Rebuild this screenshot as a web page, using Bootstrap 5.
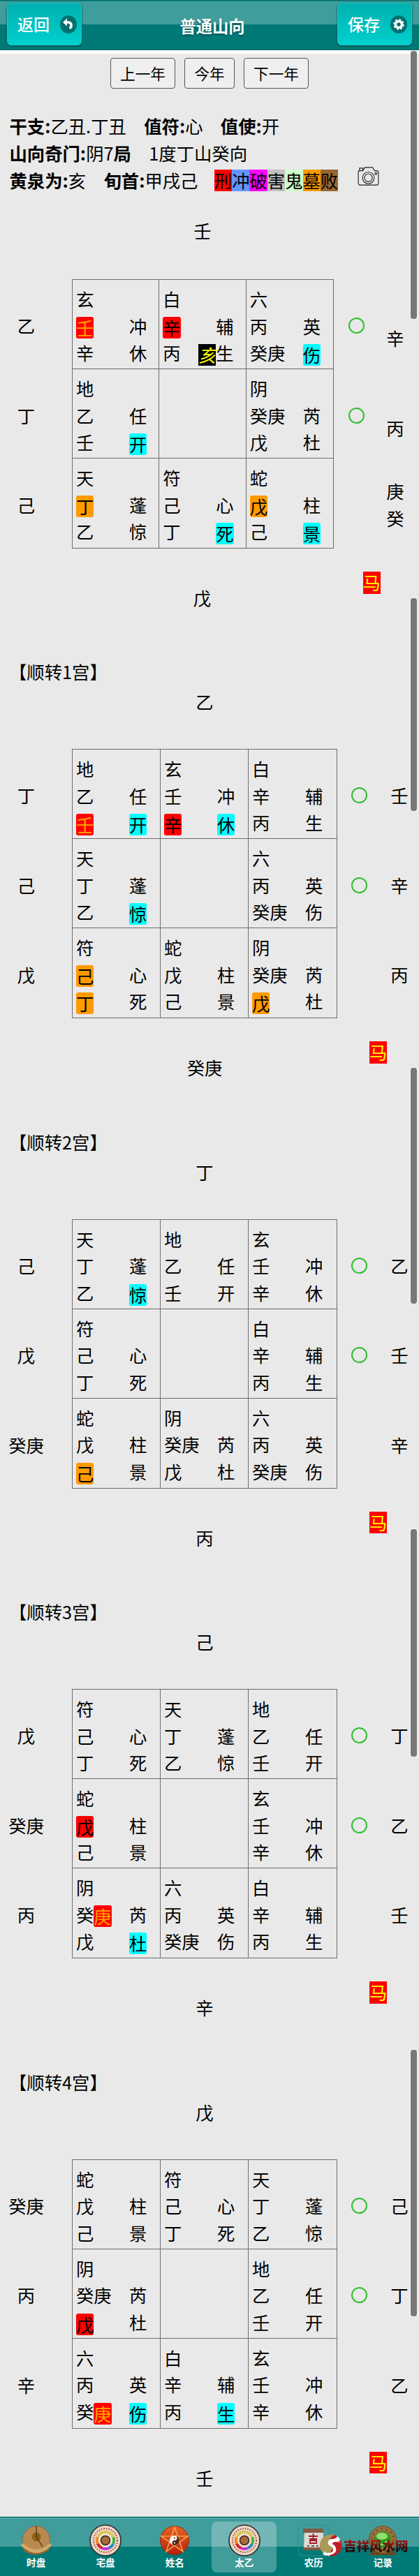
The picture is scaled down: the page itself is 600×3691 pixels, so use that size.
<!DOCTYPE html>
<html lang="zh-CN">
<head>
  <meta charset="UTF-8" />
  <meta name="viewport" content="width=device-width, initial-scale=1.0"/>
  <title>普通山向</title>
  <link href="https://cdn.jsdelivr.net/npm/bootstrap@5.3.0/dist/css/bootstrap.min.css" rel="stylesheet">
  <style>
    body {
      background: #e9e9e9;
      color: #000;
      font-family: "Noto Sans CJK SC", sans-serif;
      font-size: 25.35px;
      line-height: 38.7px;
    }
    .app { width: 600px; height: 3691px; overflow: hidden; }

    /* top bar */
    .topbar {
      height: 72px;
      background: linear-gradient(#006e6c 0, #006e6c 1px, #3f9d9b 2px, #3f9d9b 35px, #007876 35px, #007a77 70px, #066 72px);
      padding: 4px 10px 0;
    }
    .topbar h1 { font-size: 23.3px; line-height: 67px; color: #fff; text-shadow: 0 2px 2px #055; }
    .topbtn {
      width: 107px;
      height: 61px;
      padding: 0 6px 0 14px;
      border: 1px solid #18c8c6;
      border-radius: 6px;
      background: linear-gradient(#00b1b0, #00cfce);
      box-shadow: 0 1px 3px #044;
      color: #fff;
      font-size: 23px;
      font-weight: 500;
    }
    .topgap { height: 5px; background: #fff; }

    .yearbtns { height: 50px; margin-top: 6px; gap: 13.5px; }
    .yearbtn {
      height: 44px;
      padding: 0 13px;
      border: 1px solid #555;
      border-radius: 4px;
      background: #efefef;
      color: #000;
      font-size: 21.6px;
      line-height: 42px;
    }

    .info { margin-top: 28px; padding-left: 13.5px; line-height: 39px; white-space: pre; }
    .info > div { height: 39px; }
    .info .tag { display: inline-block; line-height: 31px; height: 31px; vertical-align: middle; }
    #legend { margin-left: -2px; }
    .camera { margin: 0 0 12px 27px; }

    /* one chart */
    .chart-title { height: 38px; padding-left: 13px; line-height: 36px; }
    .chart-top { height: 91px; text-align: center; padding: 4px 14px 0 0; }
    .board { height: 386px; }
    .side-left { width: 103px; padding-right: 28px; }
    .side-left div, .side-circle div { height: 128.6px; padding-top: 47px; text-align: center; }
    .side-circle { width: 63px; }
    .side-circle i { display: block; width: 23px; height: 23px; border: 2px solid #2fbf2f; border-radius: 50%; margin: 8px auto 0; }
    .side-right { width: 52px; text-align: center; }
    .side-right div { height: 128.6px; padding-top: 47px; }
    .palace { width: 380px; display: grid; grid-template: repeat(3, 1fr) / repeat(3, 1fr); border: 1px solid #6c6c6c; }
    .palace > div { border: 0 solid #6c6c6c; border-width: 0 1px 1px 0; padding: 8px 0 0 5px; white-space: pre; }
    .palace > div > div { height: 38.7px; }
    .palace > div:nth-child(3n) { border-right: 0; }
    .palace > div:nth-child(n+7) { border-bottom: 0; }
    .chart-foot { height: 158.5px; position: relative; }
    .chart-foot .below { width: 586px; padding-top: 51px; text-align: center; }
    .horse { position: absolute; left: 529px; top: 33px; height: 31.5px; line-height: 31px; background: #f00; color: #ff0; }
    section:last-child .chart-foot { height: 126px; }

    .mk { display: inline-block; height: 31px; line-height: 31px; border-radius: 3px; vertical-align: middle; margin-top: -2px; }
    .mk-r { background: #f00; }
    .mk-o { background: #f00; color: #ffa500; }
    .mk-g { background: #ff9a00; }
    .mk-c { background: #0ff; }
    .mk-h { background: #000; color: #ff0; border-radius: 0; font-style: italic; }

    /* first chart has a narrower palace and no title */
    .chart-first .chart-top { height: 122px; padding: 33px 20px 0 0; }
    .chart-first .palace { width: 375px; }
    .chart-first .side-circle { width: 66px; }
    .chart-first .side-circle { margin-left: -1px; }
    .chart-first .side-right { padding-top: 65px; margin-left: -3px; }
    .chart-first .side-right div { height: auto; padding: 0 0 90px; }
    .chart-first .side-right div:nth-child(2) { padding-bottom: 52px; }
    .chart-first .chart-foot { height: 158px; }
    .chart-first .below { width: 579px; }
    .chart-first .horse { left: 519.5px; }

    .thumb { position: absolute; left: 588px; width: 9px; background: #777; border-radius: 4px; box-shadow: 0 0 1px 1px #f4f4f4; }

    /* bottom tabs */
    .tabs {
      height: 86px;
      background: linear-gradient(#006b69 0, #006b69 1px, #6fbcba 2px, #419d9b 3px, #419d9b 43px, #007a77 43px);
      padding: 0 2px;
    }
    .tab-item { flex: 1 0 0; padding-top: 4px; height: 73px; margin: 7px 3px 0; border-radius: 8px; text-align: center; color: #fff; font-size: 13.6px; font-weight: 700; line-height: 16px; }
    .tab-item svg { display: block; margin: 0 auto; }
    .tab-item.active { background: rgba(255, 255, 255, .26); }
    .watermark { position: absolute; left: 458px; top: 3630px; height: 34px; }
    .watermark b {
      font-size: 18.5px;
      font-weight: 900;
      margin-left: 2px;
      background: linear-gradient(#b01818 30%, #2a0c0c 65%);
      -webkit-background-clip: text;
      color: transparent;
    }
  </style>
</head>
<body>
  <div class="app position-relative">
    <header class="topbar d-flex justify-content-between">
      <button class="topbtn d-flex align-items-center justify-content-between">返回
        <svg width="24" height="26" viewBox="0 0 24 26"><ellipse cx="12" cy="13" rx="12" ry="13" fill="#00716f"/><path d="M8 10h4.500a4.500 4.500 0 0 1 1 8.500" fill="none" stroke="#fff" stroke-width="3.500"/><path d="M4 10l6-5.500v11z" fill="#fff"/></svg>
      </button>
      <h1 class="mb-0 fw-bold ps-2">普通山向</h1>
      <button class="topbtn d-flex align-items-center justify-content-between">保存
        <svg width="24" height="26" viewBox="0 0 24 26"><ellipse cx="12" cy="13" rx="12" ry="13" fill="#00716f"/><circle cx="12" cy="13" r="4.500" fill="none" stroke="#fff" stroke-width="3.500"/><circle cx="12" cy="13" r="6.700" fill="none" stroke="#fff" stroke-width="2.200" stroke-dasharray="3 2.260"/></svg>
      </button>
    </header>
    <div class="topgap"></div>
    <div class="yearbtns d-flex justify-content-center align-items-start">
      <button class="yearbtn">上一年</button>
      <button class="yearbtn">今年</button>
      <button class="yearbtn">下一年</button>
    </div>

    <div class="info"><div><b>干支:</b>乙丑.丁丑　<b>值符:</b>心　<b>值使:</b>开</div><div><b>山向奇门:</b>阴7<b>局</b>　1度丁山癸向</div><div class="d-flex align-items-center"><span><b>黄泉为:</b>亥　<b>旬首:</b>甲戌己　</span><span id="legend" class="d-flex"></span><svg class="camera" width="33" height="27" viewBox="3 2 33 29" fill="none" stroke="#222" stroke-width="1.200"><path d="M4 8h7l3-5h12l3 5h3a3 3 0 0 1 3 3v16a3 3 0 0 1-3 3H7a3 3 0 0 1-3-3V11a3 3 0 0 1 2-3V4h5v4"/><circle cx="19.500" cy="19" r="9"/><circle cx="19.500" cy="19" r="6"/><circle cx="31" cy="12.500" r="1.500"/></svg></div></div>

    <main id="charts"></main>

    <nav class="tabs d-flex">
      <div class="tab-item">
        <svg width="46" height="46" viewBox="0 0 46 46"><path d="M3 32q20 11 40-3l-2 8q-17 12-35 2z" fill="#8a6236"/><circle cx="23" cy="22" r="19.500" fill="#b98a50" stroke="#8d6637"/><circle cx="23" cy="18" r="6.500" fill="#8b6212"/><path d="M23 3v15l9 14" fill="none" stroke="#4a3510" stroke-width="1.300"/><path d="M4 30q19 17 38 0" fill="none" stroke="#d2a868" stroke-width="5" stroke-linecap="round"/></svg>
        时盘
      </div>
      <div class="tab-item"><span class="luopan"></span>宅盘</div>
      <div class="tab-item">
        <svg width="46" height="46" viewBox="0 0 46 46"><defs><linearGradient id="orb" x2="0" y2="1"><stop stop-color="#e56522"/><stop offset="1" stop-color="#b52010"/></linearGradient></defs><circle cx="23" cy="23" r="20.500" fill="url(#orb)" stroke="#8c2c16"/><path d="M23 4l12 35L4 17h38L11 39z" fill="none" stroke="#f7a04b" stroke-width="1.600"/><circle cx="23" cy="23" r="7" fill="#fff"/><path d="M23 16a7 7 0 0 1 0 14a3.500 3.500 0 0 1 0-7a3.500 3.500 0 0 0 0-7" fill="#5a2410"/><circle cx="23" cy="19.500" r="1.100" fill="#5a2410"/><circle cx="23" cy="26.500" r="1.100" fill="#fff"/></svg>
        姓名
      </div>
      <div class="tab-item active"><span class="luopan"></span>太乙</div>
      <div class="tab-item">
        <svg width="46" height="46" viewBox="0 0 46 46"><rect x="1" y="1" width="44" height="44" rx="8" fill="none" stroke="#35908e"/><path d="M10 9h27v26H9z" fill="#ded9d2"/><path d="M8 6h29v6H8zM8 33h29v4H8z" fill="#825a42"/><path d="M16 17h13M22.500 13v7M17 21h11M18 23h9v4h-9z" fill="none" stroke="#a31c2c" stroke-width="1.800"/><path d="M14 31h3m3 0h4m3 0h3" stroke="#555" stroke-width="2"/></svg>
        农历
      </div>
      <div class="tab-item">
        <svg width="46" height="46" viewBox="0 0 46 46"><path d="M9 36l-5 8h38l-5-8z" fill="#6b451d"/><circle cx="23" cy="22" r="19.500" fill="#94703d" stroke="#6b4c22"/><circle cx="23" cy="22" r="15.500" fill="none" stroke="#604419" stroke-width="2" stroke-dasharray="2 5"/><circle cx="23" cy="22" r="11.500" fill="#2f9a1d"/><ellipse cx="22" cy="17" rx="8" ry="5" fill="#90de70"/><path d="M16 27q10 5 12-3" fill="none" stroke="#a2ea7a" stroke-width="2"/></svg>
        记录
      </div>
    </nav>

    <div class="watermark d-flex align-items-center">
      <svg width="32" height="32" viewBox="0 0 32 32"><circle cx="16" cy="16" r="15.500" fill="#c01c26"/><path d="M16 .5a15.500 15.500 0 0 0-6 30q8-5 8-12t-4-8q-1-5 7-9.500z" fill="#a99a5a"/><path d="M25 3q-2 4-7 4t-6 4 3 6 4 6-8 4q-4-1-7 1 3 4 9 2 12-2 10-10-1-4-5-6 0-3 5-3 5 1 6-4z" fill="#fff"/><path d="M25 5q2 3 3 7M6 26q4 3 8 4" fill="none" stroke="#fff" stroke-width="3" stroke-dasharray="2 1.500"/></svg>
      <b>吉祥风水网</b>
    </div>

    <div class="thumb" style="top:73px;height:384px"></div>
    <div class="thumb" style="top:857px;height:305px"></div>
    <div class="thumb" style="top:1530px;height:338px"></div>
    <div class="thumb" style="top:2191px;height:326px"></div>
    <div class="thumb" style="top:2937px;height:382px"></div>
  </div>

  <script src="https://cdn.jsdelivr.net/npm/bootstrap@5.3.0/dist/js/bootstrap.bundle.min.js"></script>
  <script>
    // {x字} marks a highlighted character, x is the mk-* suffix
    const charts = [
      { top: "壬", bottom: "戊", left: ["乙", "丁", "己"], right: ["辛", "丙", "庚<br>癸"], cells: [
        "玄|{o壬}　　冲|辛　　休", "白|{r辛}　　辅|丙　{h亥}生", "六|丙　　英|癸庚　{c伤}",
        "地|乙　　任|壬　　{c开}", "", "阴|癸庚　芮|戊　　杜",
        "天|{g丁}　　蓬|乙　　惊", "符|己　　心|丁　　{c死}", "蛇|{g戊}　　柱|己　　{c景}"] },
      { title: "【顺转1宫】", top: "乙", bottom: "癸庚", left: ["丁", "己", "戊"], right: ["壬", "辛", "丙"], cells: [
        "地|乙　　任|{o壬}　　{c开}", "玄|壬　　冲|{r辛}　　{c休}", "白|辛　　辅|丙　　生",
        "天|丁　　蓬|乙　　{c惊}", "", "六|丙　　英|癸庚　伤",
        "符|{g己}　　心|{g丁}　　死", "蛇|戊　　柱|己　　景", "阴|癸庚　芮|{g戊}　　杜"] },
      { title: "【顺转2宫】", top: "丁", bottom: "丙", left: ["己", "戊", "癸庚"], right: ["乙", "壬", "辛"], cells: [
        "天|丁　　蓬|乙　　{c惊}", "地|乙　　任|壬　　开", "玄|壬　　冲|辛　　休",
        "符|己　　心|丁　　死", "", "白|辛　　辅|丙　　生",
        "蛇|戊　　柱|{g己}　　景", "阴|癸庚　芮|戊　　杜", "六|丙　　英|癸庚　伤"] },
      { title: "【顺转3宫】", top: "己", bottom: "辛", left: ["戊", "癸庚", "丙"], right: ["丁", "乙", "壬"], cells: [
        "符|己　　心|丁　　死", "天|丁　　蓬|乙　　惊", "地|乙　　任|壬　　开",
        "蛇|{r戊}　　柱|己　　景", "", "玄|壬　　冲|辛　　休",
        "阴|癸{o庚}　芮|戊　　{c杜}", "六|丙　　英|癸庚　伤", "白|辛　　辅|丙　　生"] },
      { title: "【顺转4宫】", top: "戊", bottom: "壬", left: ["癸庚", "丙", "辛"], right: ["己", "丁", "乙"], cells: [
        "蛇|戊　　柱|己　　景", "符|己　　心|丁　　死", "天|丁　　蓬|乙　　惊",
        "阴|癸庚　芮|{r戊}　　杜", "", "地|乙　　任|壬　　开",
        "六|丙　　英|癸{o庚}　{c伤}", "白|辛　　辅|丙　　{c生}", "玄|壬　　冲|辛　　休"] }
    ];

    const cellHtml = text => `<div>${text.split("|").map(line =>
      `<div>${line.replace(/\{(\w)(.)\}/g, '<span class="mk mk-$1">$2</span>')}</div>`).join("")}</div>`;

    document.getElementById("charts").innerHTML = charts.map(c => `
      <section class="${c.title ? "" : "chart-first"}">
        ${c.title ? `<div class="chart-title">${c.title}</div>` : ""}
        <div class="chart-top">${c.top}</div>
        <div class="board d-flex">
          <div class="side-left">${c.left.map(t => `<div>${t}</div>`).join("")}</div>
          <div class="palace">${c.cells.map(cellHtml).join("")}</div>
          <div class="side-circle"><div><i></i></div><div><i></i></div></div>
          <div class="side-right">${c.right.map(t => `<div>${t}</div>`).join("")}</div>
        </div>
        <div class="chart-foot">
          <div class="below">${c.bottom}</div>
          <span class="horse">马</span>
        </div>
      </section>`).join("");

    // legend colours
    const legend = { "刑": "#f00", "冲": "#6495ff", "破": "#f0f", "害": "#c0c0c0", "鬼": "#cfc", "墓": "#ff9900", "败": "#996633" };
    for (const [name, color] of Object.entries(legend)) {
      const tag = document.createElement("span");
      tag.className = "tag";
      tag.style.background = color;
      tag.textContent = name;
      document.getElementById("legend").appendChild(tag);
    }

    // compass icon, shared by two tabs
    const ring = ["#3cb83c", "#2f86c9", "#c32be0", "#d81f2a", "#f58a1f", "#d9c65a", "#d9c65a", "#d9c65a"];
    const arcs = ring.map((color, i) => {
      const a = (i * 45 - 22) * Math.PI / 180, b = (i * 45 + 23) * Math.PI / 180;
      const p = t => `${(23 + 12 * Math.cos(t)).toFixed(1)} ${(23 + 12 * Math.sin(t)).toFixed(1)}`;
      return `<path d="M${p(a)}A12 12 0 0 1 ${p(b)}" fill="none" stroke="${color}" stroke-width="4"/>`;
    }).join("");
    document.querySelectorAll(".luopan").forEach(el => {
      el.outerHTML = `<svg width="46" height="46" viewBox="0 0 46 46">
        <circle cx="23" cy="23" r="22" fill="#ecd6c4" stroke="#2c2c2c" stroke-width="1.600"/>
        <circle cx="23" cy="23" r="17" fill="none" stroke="#9a4a3c" stroke-width="2" stroke-dasharray="1.500 2"/>
        ${arcs}
        <circle cx="23" cy="23" r="8.500" fill="none" stroke="#f3e3d0" stroke-width="3"/>
        <circle cx="23" cy="23" r="6.500" fill="#a96a3a" stroke="#3a2a20" stroke-width="1.500"/>
      </svg>`;
    });
  </script>
</body>
</html>
